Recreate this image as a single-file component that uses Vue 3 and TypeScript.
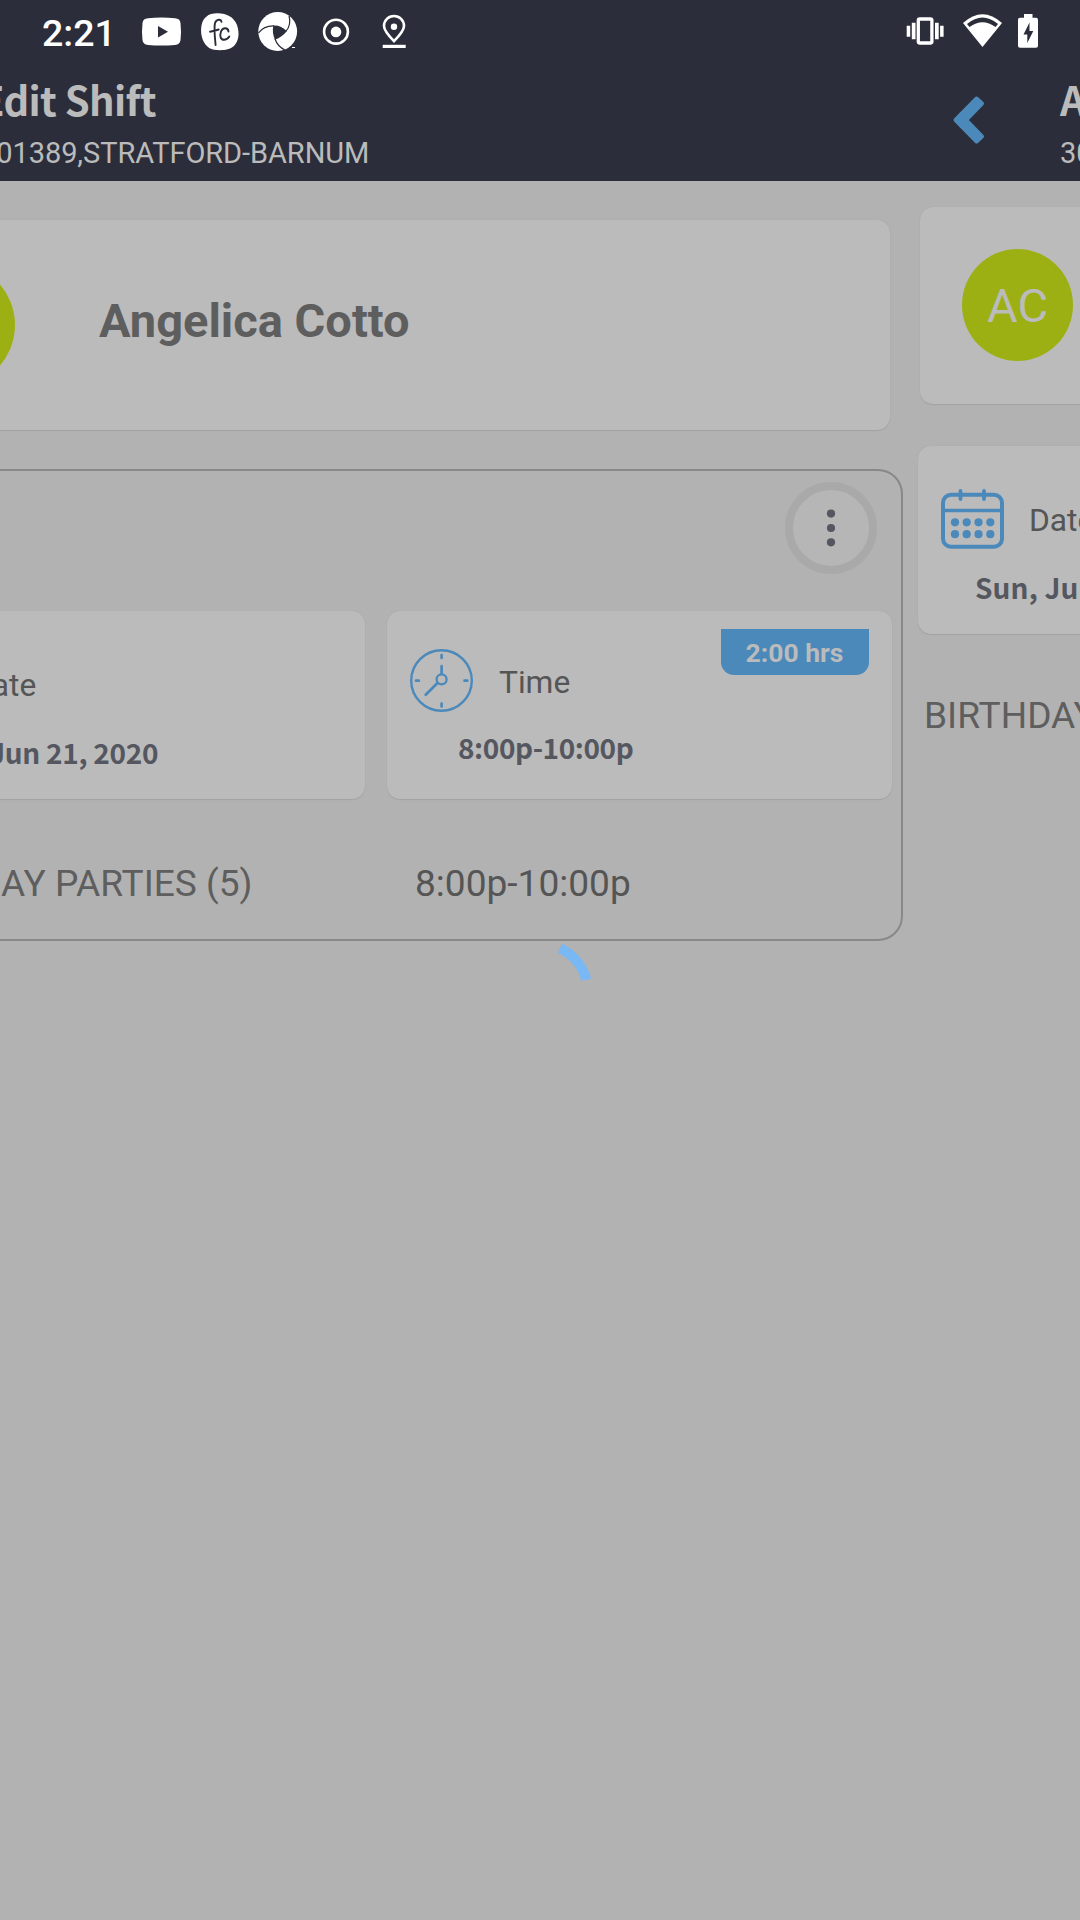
<script setup lang="ts">
interface Shift {
  date: string
  range: string
  hours: string
  role: string
}

const employee = { name: 'Angelica Cotto', initials: 'AC' }
const store = '301389,STRATFORD-BARNUM'
const shift: Shift = {
  date: 'Sun, Jun 21, 2020',
  range: '8:00p-10:00p',
  hours: '2:00 hrs',
  role: 'BIRTHDAY PARTIES (5)',
}
const dotColumns = [14, 25.7, 37.5, 49.3]
const dotRows = [33.3, 45.2]
</script>

<template>
  <div class="screen">
    <div class="status">
      <span class="clock">2:21</span>
      <svg width="60" height="62" viewBox="132 0 60 62">
        <path fill="#fff" d="M148 18.2Q161.500 17 175 18.200Q180 18.500 180.500 23Q181.500 31.500 180.500 40Q180 44.700 175 45Q161.500 46 148 45Q143 44.700 142.500 40Q141.500 31.500 142.500 23Q143 18.500 148 18.200Z" />
        <path fill="#2b2e3a" d="M158 26v11.500l10-5.800z" />
      </svg>
      <svg width="56" height="62" viewBox="192 0 56 62">
        <path fill="#fff" d="M217 13.300C226 13 234 17 237 25C240 34 238.500 41 234 46C229 50.500 221 50.500 214 49.800C207 48.500 202.500 42 201.300 34C200.700 27 201.500 21 206 17C209 14 213 13.400 217 13.300Z" />
        <path fill="none" stroke="#2b2e3a" stroke-width="1.9" stroke-linecap="round" d="M221.500 21.800C221 18.700 216.500 19 215 23C213.800 28 214.800 37 215.600 45M210 31.700Q214.500 31 218.700 29.500M228.500 31.500C228 27.500 222.800 27 221 31.500C219.500 36 220.500 39.800 224 39.800C226.500 39.800 228 38.500 229.300 36.500" />
      </svg>
      <svg width="62" height="62" viewBox="248 0 62 62">
        <circle cx="277.700" cy="31.500" r="19.400" fill="#fff" />
        <path fill="#2b2e3a" d="M273.300 25.600Q281 25 286.800 31.200Q282 37 275 39.700Q271.800 33 273.300 25.600Z" />
        <g fill="none" stroke="#2b2e3a" stroke-width="1.200">
          <path d="M258.500 32.800Q264 25.500 274 25.800" />
          <path d="M289 15.500Q291.500 25 286 31.200" />
          <path d="M274.800 38.500Q277.500 46.500 285 50" />
        </g>
        <path fill="#2b2e3a" d="M284 51Q289 49 291.500 46L298 46v6h-14z" />
        <path d="M292 47.500h3" stroke="#fff" stroke-width="1" />
      </svg>
      <svg width="54" height="62" viewBox="310 0 54 62">
        <circle cx="336" cy="31.700" r="11.900" fill="none" stroke="#fff" stroke-width="2.600" />
        <circle cx="336" cy="31.900" r="5.300" fill="#fff" />
      </svg>
      <svg width="60" height="62" viewBox="364 0 60 62">
        <path fill="none" stroke="#fff" stroke-width="2.600" d="M394 41.200C388 35 384 30 384 26a10 10 0 0 1 20 0C404 30 400 35 394 41.200Z" />
        <circle cx="394" cy="26.800" r="3.200" fill="#fff" />
        <path fill="#fff" d="M382.700 44.800h23v3.200h-23z" />
      </svg>
      <svg class="push" width="56" height="62" viewBox="897 0 56 62">
        <rect x="918.300" y="19" width="13.600" height="24" rx="1.500" fill="none" stroke="#fff" stroke-width="3.300" />
        <path fill="#fff" d="M906.700 25.800h3.500v11h-3.500zM911.800 22.700h3.700v16.600h-3.700zM935 22.700h3.700v16.600h-3.700zM940.100 25.800h3.500v11h-3.500z" />
      </svg>
      <svg width="57" height="62" viewBox="953 0 57 62">
        <path fill="#fff" d="M963 23Q982.500 5.500 1002 23L982.500 47Z" />
        <path fill="#2b2e3a" d="M967 24Q982.500 11 998 24L995.500 27Q982.500 17.500 969.500 27Z" />
      </svg>
      <svg width="70" height="62" viewBox="1010 0 70 62">
        <path fill="#fff" d="M1024 14h8.500v3.700h3.500q2 0 2 2v26q0 2-2 2h-16q-2 0-2-2v-26q0-2 2-2h4z" />
        <path fill="#2b2e3a" d="M1029.500 22.500l-6 12h3.800v8.500l6-12h-3.800z" />
      </svg>
    </div>

    <div class="pages">
      <section class="page">
        <header class="bar">
          <div class="titles">
            <h1>Edit Shift</h1>
            <p>{{ store }}</p>
          </div>
        </header>

        <div class="card person">
          <div class="avatar large"></div>
          <span class="name">{{ employee.name }}</span>
        </div>

        <div class="group">
          <button class="more" aria-label="More">
            <svg width="92" height="92" viewBox="0 0 92 92" fill="#555760">
              <circle cx="46" cy="31.600" r="4.100" />
              <circle cx="46" cy="46" r="4.100" />
              <circle cx="46" cy="60.300" r="4.100" />
            </svg>
          </button>
          <div class="tiles">
            <div class="card tile date">
              <div class="head"><span class="icon"></span><span class="label">Date</span></div>
              <div class="value">{{ shift.date }}</div>
            </div>
            <div class="card tile time">
              <div class="head">
                <svg class="icon" width="63" height="63" viewBox="0 0 63 63" fill="none" stroke="#4c89bb" stroke-linecap="round">
                  <circle cx="31.500" cy="31.500" r="30.300" stroke-width="2.400" />
                  <path stroke-width="2.700" d="M31.600 6v3M31.600 54.500v3M6 31.700h2.800M54.500 31.700h2.800M31.600 17v8M27.500 34L15.700 45.800" />
                  <circle cx="31.600" cy="30.300" r="5" stroke-width="2.300" />
                </svg>
                <span class="label">Time</span>
              </div>
              <div class="value">{{ shift.range }}</div>
              <span class="badge">{{ shift.hours }}</span>
            </div>
          </div>
          <div class="job">
            <span class="role">{{ shift.role }}</span>
            <span class="range">{{ shift.range }}</span>
          </div>
        </div>
      </section>

      <section class="page">
        <header class="bar">
          <svg class="back" width="34" height="50" viewBox="0 0 34 50">
            <path fill="#4c89bb" stroke="#4c89bb" stroke-width="4" stroke-linejoin="round" d="M3.500 25L24.600 3.500L30 8.500L14 25L30 41.500L24.600 46.500Z" />
          </svg>
          <div class="titles next">
            <h1>Add Shift</h1>
            <p>{{ store }}</p>
          </div>
        </header>

        <div class="card person next-person">
          <div class="avatar">{{ employee.initials }}</div>
        </div>

        <div class="card tile date next-date">
          <div class="head">
            <svg class="icon" width="63" height="60" viewBox="0 0 63 60" fill="none" stroke="#4c89bb">
              <rect x="2" y="5.700" width="59" height="52" rx="8" stroke-width="4" />
              <path stroke-width="3.600" d="M2 21.500h59" />
              <path stroke-width="3.800" stroke-linecap="round" d="M19.500 2v8M43 2v8" />
              <g fill="#4c89bb" stroke="none">
                <template v-for="y in dotRows" :key="y">
                  <circle v-for="x in dotColumns" :key="x" :cx="x" :cy="y" r="4.100" />
                </template>
              </g>
            </svg>
            <span class="label">Date</span>
          </div>
          <div class="value">{{ shift.date }}</div>
        </div>
        <div class="next-role">{{ shift.role }}</div>
      </section>
    </div>

    <svg class="spinner" width="108" height="108" viewBox="486 938.500 108 108">
      <path fill="none" stroke="#78b8f5" stroke-width="10" d="M560 947.700A49 49 0 0 1 586.300 979.300" />
    </svg>
  </div>
</template>

<style>
body {
  margin: 0;
}
</style>

<style scoped>
.screen {
  position: relative;
  width: 1080px;
  height: 1920px;
  overflow: hidden;
  background: #b2b2b2;
  font-family: Roboto, sans-serif;
  color: #5e5e5e;
}
.screen * {
  box-sizing: border-box;
}
svg {
  display: block;
  flex: none;
}
.status {
  display: flex;
  height: 62px;
  background: #2b2e3a;
}
.clock {
  width: 132px;
  padding-left: 42px;
  font-size: 37.500px;
  line-height: 67px;
  font-weight: 500;
  color: #fff;
}
.push {
  margin-left: auto;
}
.pages {
  display: flex;
  width: 2160px;
  margin-left: -170px;
}
.page {
  width: 1080px;
  flex: none;
}
.bar {
  display: flex;
  height: 119px;
  background: #2b2e3a;
  color: #bbb;
}
.titles {
  padding: 12px 0 0 150px;
}
.titles.next {
  padding-left: 74px;
}
h1 {
  margin: 0;
  font: 700 40px/50px "Noto Sans CJK SC", sans-serif;
  font-feature-settings: "liga" 1;
  letter-spacing: -0.650px;
}
p {
  margin: 12px 0 0;
  font-size: 29px;
  line-height: 34px;
  letter-spacing: -0.070px;
}
.back {
  margin: 33px 0 0 42px;
}
.card {
  background: #bbb;
  border-radius: 13px;
  box-shadow: 0 1px 1px rgba(0, 0, 0, 0.08), 0 0 1px rgba(0, 0, 0, 0.1);
}
.person {
  display: flex;
  align-items: center;
  height: 210px;
  margin: 39px 20px 0;
}
.avatar {
  width: 111px;
  height: 112px;
  flex: none;
  border-radius: 50%;
  background: #9db013;
  color: #bbb;
  font-size: 47px;
  line-height: 113px;
  text-align: center;
}
.avatar.large {
  width: 124px;
  height: 124px;
  margin-left: 41px;
}
.name {
  padding-bottom: 9px;
  margin-left: 84px;
  font-size: 47px;
  font-weight: 700;
}
.next-person {
  height: 197px;
  margin: 26px 10px 0;
  padding: 0 0 2px 42px;
}
.group {
  height: 472px;
  margin: 39px 7px 0;
  padding-top: 11px;
  border: 2px solid #888;
  border-radius: 25px;
}
.more {
  display: flex;
  align-items: center;
  justify-content: center;
  width: 92px;
  height: 92px;
  margin: 0 24px 0 auto;
  padding: 0;
  border: 8.500px solid #a9a9a9;
  border-radius: 50%;
  background: #b6b6b6;
}
.tiles {
  display: flex;
  justify-content: flex-end;
  gap: 22px;
  margin: 37px 9px 0 0;
}
.tile {
  position: relative;
  width: 505px;
  height: 188px;
  flex: none;
}
.head {
  display: flex;
  height: 118px;
  padding: 38px 0 0 23px;
}
.icon {
  width: 63px;
  flex: none;
}
.label {
  margin: 15px 0 0 26px;
  font-size: 31.700px;
  line-height: 38px;
  color: #555;
}
.value {
  padding-left: 71px;
  font: 700 28px/36px "Noto Sans CJK SC", sans-serif;
  letter-spacing: -0.420px;
  color: #555760;
}
.date .head {
  height: 123px;
  padding-top: 43px;
}
.date .label {
  margin: 13px 0 0 25px;
}
.date .value {
  padding-left: 62px;
  letter-spacing: -0.300px;
}
.badge {
  position: absolute;
  top: 18px;
  right: 23px;
  width: 148px;
  height: 46px;
  padding-right: 1px;
  border-radius: 0 0 13px 13px;
  background: #4c89bb;
  color: #bbb;
  font-size: 26.500px;
  font-weight: 700;
  line-height: 47px;
  text-align: center;
}
.job {
  display: flex;
  margin-top: 63px;
  padding-left: 35px;
  font-size: 37.100px;
  line-height: 44px;
}
.role {
  width: 541px;
}
.range {
  color: #555;
}
.next-date {
  width: auto;
  margin: 42px 8px 0;
}
.date.next-date .value {
  padding-left: 57px;
  letter-spacing: 0.150px;
}
.next-role {
  margin: 60px 0 0 14px;
  font-size: 37.100px;
  line-height: 44px;
}
.spinner {
  position: absolute;
  left: 486px;
  top: 938.500px;
}
</style>
